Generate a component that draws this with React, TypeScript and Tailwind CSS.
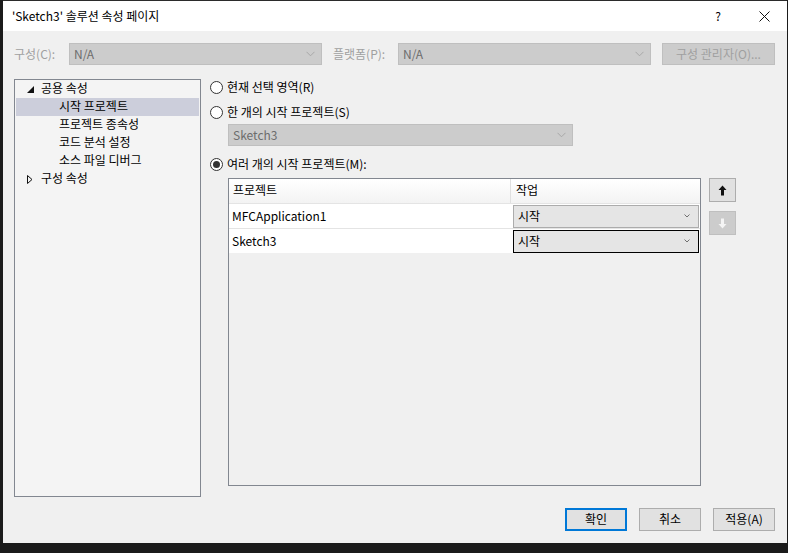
import React from "react";

const font = { fontFamily: '"Noto Sans CJK KR", "Noto Sans", sans-serif' };

const Chevron = ({ color = "#a0a0a0", small }: { color?: string; small?: boolean }) =>
  small ? (
    <svg width="6" height="4" viewBox="0 0 6 4" fill="none">
      <path d="M0.5 0.5 L3 3 L5.5 0.5" stroke={color} strokeWidth="1" />
    </svg>
  ) : (
    <svg width="9" height="6" viewBox="0 0 9 6" fill="none">
      <path d="M0.5 0.8 L4.5 4.8 L8.5 0.8" stroke={color} strokeWidth="1" />
    </svg>
  );

const DisabledSelect = ({ value, className }: { value: string; className: string }) => (
  <div
    className={`flex h-[22px] items-center justify-between border border-[#bfbfbf] bg-[#cccccc] pl-[4px] pr-[6px] text-[#6d6d6d] ${className}`}
  >
    <span>{value}</span>
    <Chevron color="#a8a8a8" />
  </div>
);

const Radio = ({ checked, label }: { checked?: boolean; label: string }) => (
  <div className="flex items-center gap-[4px]">
    <div className="flex h-[13px] w-[13px] items-center justify-center rounded-full border border-[#333333] bg-white">
      {checked && <div className="h-[7px] w-[7px] rounded-full bg-[#333333]" />}
    </div>
    <span className="-mt-[1px]">{label}</span>
  </div>
);

const TreeItem = ({ label, selected }: { label: string; selected?: boolean }) => (
  <div className={`flex h-[18px] items-center pb-[2px] pl-[43px] ${selected ? "bg-[#cccedb]" : ""}`}>
    {label}
  </div>
);

const ComboCell = ({ focused }: { focused?: boolean }) => (
  <div
    className={`mx-[1px] flex h-[23px] flex-1 items-center justify-between bg-[#e5e5e5] pl-[4px] pr-[8px] ${
      focused ? "border border-black" : "border border-[#acacac]"
    }`}
  >
    <span className="-mt-[1px]">시작</span>
    <Chevron color="#707070" small />
  </div>
);

const DialogButton = ({ label, primary }: { label: string; primary?: boolean }) => (
  <button
    className={`flex h-[23px] w-[62px] items-center justify-center bg-[#e1e1e1] pb-[1px] text-black ${
      primary ? "border-2 border-[#0078d7]" : "border border-[#adadad]"
    }`}
  >
    {label}
  </button>
);

export default function App() {
  return (
    <div className="h-[553px] w-[788px] overflow-hidden bg-[#1b1b1b] text-[12px] leading-none text-black" style={font}>
      <div className="ml-[3px] flex h-[543px] w-[784px] flex-col border-t border-[#2b2b2b]">
        {/* title bar */}
        <div className="flex h-[30px] items-center bg-white pl-[9px]">
          <span className="flex-1">'Sketch3' 솔루션 속성 페이지</span>
          <span className="mr-[38px]">?</span>
          <svg width="11" height="11" viewBox="0 0 11 11" className="mr-[17px]">
            <path d="M0.5 0.5 L10.5 10.5 M10.5 0.5 L0.5 10.5" stroke="#111" strokeWidth="1" />
          </svg>
        </div>

        {/* body */}
        <div className="flex flex-1 flex-col bg-[#f0f0f0] px-[11px] pt-[12px]">
          <div className="flex h-[22px] items-center text-[#a0a0a0]">
            <span className="w-[55px]">구성(C):</span>
            <DisabledSelect value="N/A" className="w-[253px]" />
            <span className="ml-[11px] w-[65px]">플랫폼(P):</span>
            <DisabledSelect value="N/A" className="w-[253px]" />
            <div className="ml-[11px] flex h-[22px] w-[113px] items-center justify-center border border-[#bfbfbf] bg-[#cccccc]">
              구성 관리자(O)...
            </div>
          </div>

          <div className="mt-[14px] flex h-[418px]">
            {/* tree */}
            <div className="w-[187px] border border-[#828790] bg-[#f4f4f4] px-[1px]">
              <div className="flex h-[18px] items-center pb-[2px]">
                <svg width="7" height="7" viewBox="0 0 7 7" className="ml-[11px] mr-[7px] mt-[2px]">
                  <path d="M7 0 L7 7 L0 7 Z" fill="#111" />
                </svg>
                공용 속성
              </div>
              <TreeItem label="시작 프로젝트" selected />
              <TreeItem label="프로젝트 종속성" />
              <TreeItem label="코드 분석 설정" />
              <TreeItem label="소스 파일 디버그" />
              <div className="flex h-[18px] items-center pb-[2px]">
                <svg width="6" height="9" viewBox="0 0 6 9" className="ml-[11px] mr-[8px] mt-[2px]">
                  <path d="M0.5 0.5 L5 4.5 L0.5 8.5 Z" fill="none" stroke="#111" strokeWidth="1" />
                </svg>
                구성 속성
              </div>
            </div>

            {/* right panel */}
            <div className="ml-[9px] flex flex-1 flex-col pt-[1px]">
              <div className="flex h-[14px] items-center">
                <Radio label="현재 선택 영역(R)" />
              </div>
              <div className="mt-[11px] flex h-[14px] items-center">
                <Radio label="한 개의 시작 프로젝트(S)" />
              </div>
              <DisabledSelect value="Sketch3" className="mt-[5px] ml-[18px] w-[345px]" />
              <div className="mt-[11px] flex h-[14px] items-center">
                <Radio checked label="여러 개의 시작 프로젝트(M):" />
              </div>

              <div className="mt-[7px] ml-[18px] flex">
                {/* grid */}
                <div className="flex h-[308px] w-[473px] flex-col border border-[#828790] bg-[#f0f0f0]">
                  <div className="flex h-[24px] bg-gradient-to-b from-white to-[#f3f3f3]">
                    <div className="flex w-[282px] items-center border-r border-[#e0e0e0] pb-[2px] pl-[4px]">프로젝트</div>
                    <div className="flex flex-1 items-center pb-[2px] pl-[5px]">작업</div>
                  </div>
                  <div className="flex h-[25px] items-center border-t border-[#e4e4e4] bg-white">
                    <div className="-mt-[1px] w-[283px] pl-[3px]">MFCApplication1</div>
                    <ComboCell />
                  </div>
                  <div className="flex h-[25px] items-center border-t border-[#e4e4e4] bg-white">
                    <div className="-mt-[1px] w-[283px] pl-[3px]">Sketch3</div>
                    <ComboCell focused />
                  </div>
                </div>

                {/* move buttons */}
                <div className="ml-[8px] flex flex-col">
                  <div className="flex h-[24px] w-[27px] items-center justify-center border border-[#adadad] bg-[#e1e1e1]">
                    <svg width="9" height="11" viewBox="0 0 9 11">
                      <path d="M4.5 0.5 L8.5 5 L6 5 L6 10.5 L3 10.5 L3 5 L0.5 5 Z" fill="#111" />
                    </svg>
                  </div>
                  <div className="mt-[9px] flex h-[24px] w-[27px] items-center justify-center border border-[#bfbfbf] bg-[#cccccc]">
                    <svg width="9" height="11" viewBox="0 0 9 11">
                      <path d="M4.5 10.5 L8.5 6 L6 6 L6 0.5 L3 0.5 L3 6 L0.5 6 Z" fill="#f4f4f4" />
                    </svg>
                  </div>
                </div>
              </div>
            </div>
          </div>

          <div className="mt-[11px] flex justify-end gap-[12px] pr-[1px]">
            <DialogButton label="확인" primary />
            <DialogButton label="취소" />
            <DialogButton label="적용(A)" />
          </div>
        </div>
      </div>
    </div>
  );
}
